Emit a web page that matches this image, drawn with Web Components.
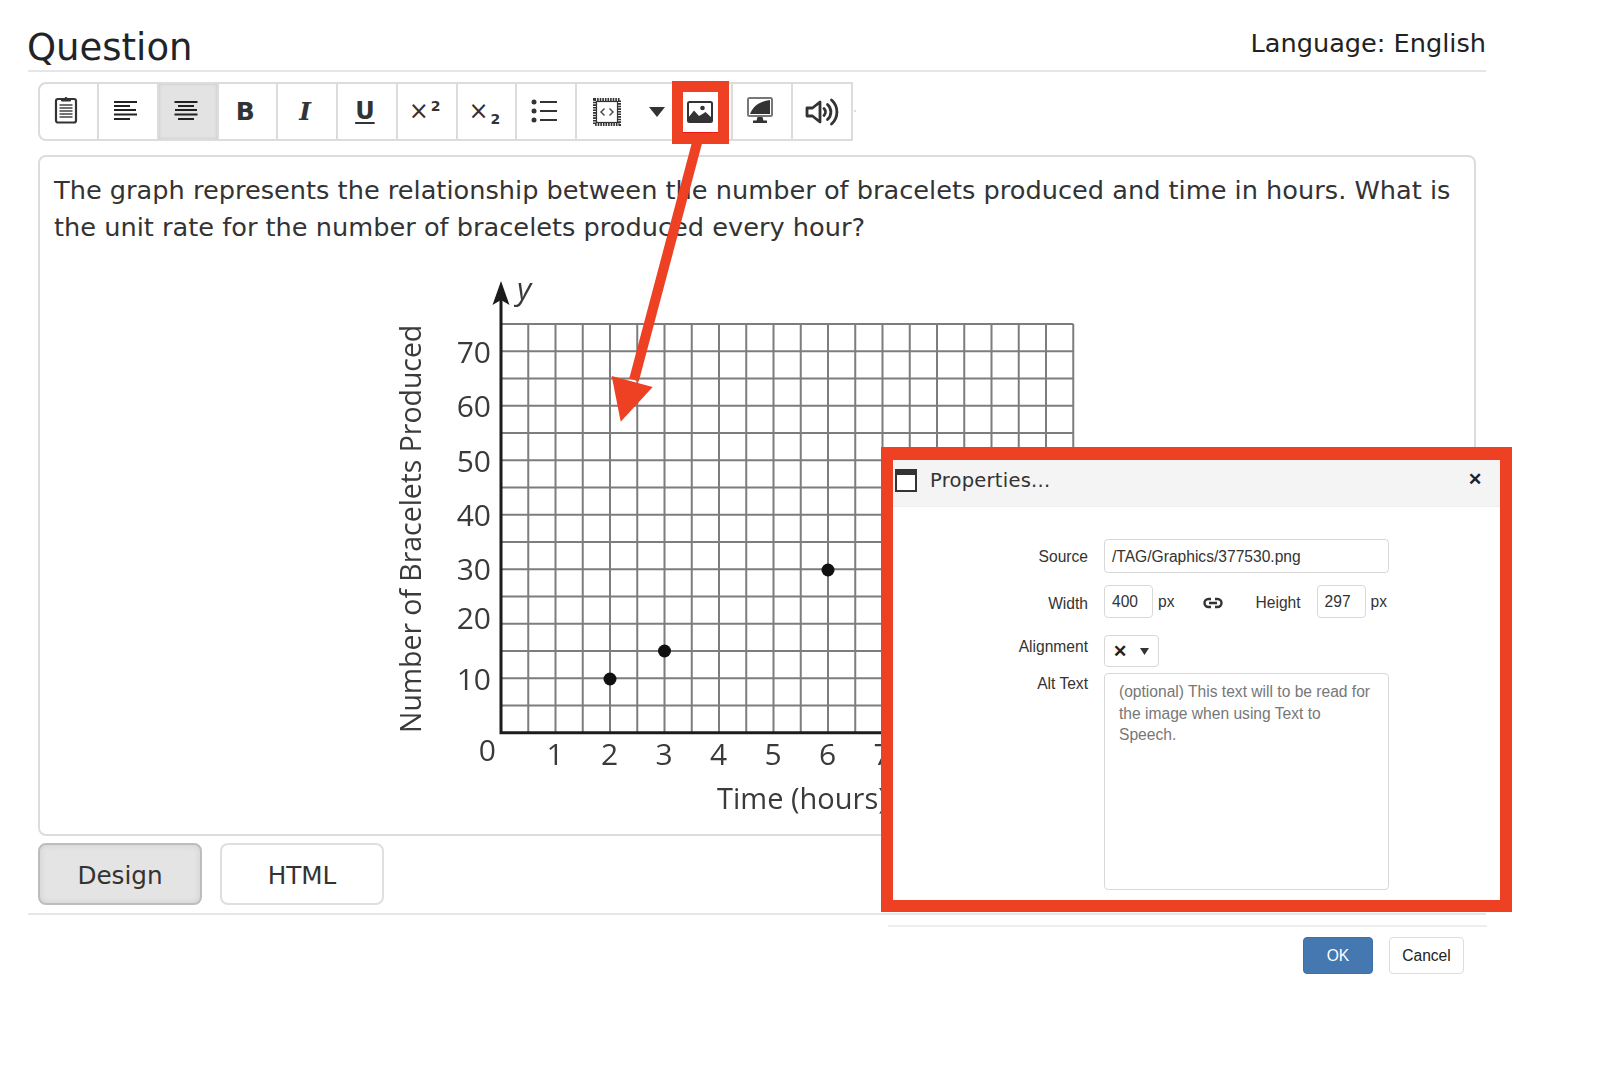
<!DOCTYPE html>
<html lang="en">
<head>
<meta charset="utf-8">
<title>Question</title>
<style>
  html, body { margin: 0; background: #fff; }
  body { font-family: "DejaVu Sans", Verdana, sans-serif; color: #333; height: 1080px; overflow: hidden; position: relative; }
  tool-button sup, tool-button sub { font-size: 14px; font-weight: 700; margin-left: 2px; }
  tool-button sup { vertical-align: 8px; line-height: 0; }
  tool-button sub { vertical-align: -5px; line-height: 0; }
</style>
</head>
<body>
<question-page>
  <page-header title-text="Question" language="Language: English"></page-header>
  <editor-toolbar>
    <tool-button><tool-icon name="clipboard"></tool-icon></tool-button>
    <tool-button><tool-icon name="align-left"></tool-icon></tool-button>
    <tool-button active><tool-icon name="align-center"></tool-icon></tool-button>
    <tool-button><b>B</b></tool-button>
    <tool-button><i>I</i></tool-button>
    <tool-button><u>U</u></tool-button>
    <tool-button><span>×<sup>2</sup></span></tool-button>
    <tool-button><span>×<sub>2</sub></span></tool-button>
    <tool-button><tool-icon name="list"></tool-icon></tool-button>
    <tool-button kind="code"><tool-icon name="code"></tool-icon><tool-icon name="caret"></tool-icon></tool-button>
    <tool-button kind="image" highlight><tool-icon name="image"></tool-icon></tool-button>
    <tool-button kind="plain"><tool-icon name="monitor"></tool-icon></tool-button>
    <tool-button kind="last"><tool-icon name="speaker"></tool-icon></tool-button>
  </editor-toolbar>
  <editor-pane>
    The graph represents the relationship between the number of bracelets produced and time in hours. What is the unit rate for the number of bracelets produced every hour?
    <bracelet-graph slot="figure"></bracelet-graph>
  </editor-pane>
  <mode-tabs></mode-tabs>
</question-page>
<callout-arrow></callout-arrow>
<properties-dialog></properties-dialog>

<script>
const icons = {
  clipboard: `<svg width="24" height="29" viewBox="0 0 24 29"><rect x="2" y="4" width="20" height="23.500" rx="2" fill="#fff" stroke="#333" stroke-width="2.200"/><path d="M7.500 6V3.500h3a1.600 1.600 0 013 0h3V6z" fill="#333" stroke="#333"/><path d="M5.500 10h13M5.500 13h13M5.500 16h13M5.500 19h13M5.500 22h13" stroke="#444" stroke-width="1.500"/></svg>`,
  "align-left": `<svg width="24" height="22" viewBox="0 0 24 22"><path d="M0 2h23M0 6h16M0 10h22M0 14.500h23M0 19h16" stroke="#222" stroke-width="2" fill="none"/></svg>`,
  "align-center": `<svg width="24" height="22" viewBox="0 0 24 22"><path d="M.5 2h23M4 6h16M1 10h22M.5 14.500h23M4 19h16" stroke="#222" stroke-width="2" fill="none"/></svg>`,
  list: `<svg width="26" height="24" viewBox="0 0 26 24"><circle cx="3" cy="3" r="2.500" fill="#333"/><circle cx="3" cy="12" r="2.500" fill="#333"/><circle cx="3" cy="21" r="2.500" fill="#333"/><path d="M9 3h17M9 12h17M9 21h17" stroke="#333" stroke-width="2"/></svg>`,
  code: `<svg width="28" height="28" viewBox="0 0 28 28"><rect x="1.500" y="1.500" width="25" height="25" fill="#fff" stroke="#333" stroke-width="3" stroke-dasharray="1.600 1"/><rect x="3.500" y="3.500" width="21" height="21" fill="none" stroke="#333" stroke-width="1.200"/><path d="M11.500 10.500L8 14l3.500 3.500M16.500 10.500L20 14l-3.500 3.500" fill="none" stroke="#444" stroke-width="1.400"/></svg>`,
  caret: `<svg width="16" height="10" viewBox="0 0 16 10"><path d="M0 0h16L8 10z" fill="#333"/></svg>`,
  image: `<svg width="26" height="22" viewBox="0 0 26 22"><rect x="1" y="1" width="24" height="20" rx="1.500" fill="#fff" stroke="#333" stroke-width="2"/><circle cx="15.500" cy="7" r="2.300" fill="#333"/><path d="M1 17l6-7.500 5 5.500 3.500-2 3-2 6.500 6V21H1z" fill="#333"/></svg>`,
  monitor: `<svg width="26" height="27" viewBox="0 0 26 27"><rect x="1" y="1" width="24" height="18" rx="1.500" fill="#fff" stroke="#777" stroke-width="2"/><path d="M3 17C6 9 13 4 23 3v14z" fill="#333"/><path d="M10.500 20h5l1 3.500h3.500V26H6v-2.500h3.500z" fill="#333"/></svg>`,
  speaker: `<svg width="34" height="28" viewBox="0 0 34 28"><path d="M2 10h5.500L15 4v20l-7.500-6H2z" fill="#fff" stroke="#333" stroke-width="2.800" stroke-linejoin="round"/><path d="M19 10.500a5 5 0 010 7M22.500 6.500a10 10 0 010 15M26.500 2a16 16 0 010 24" fill="none" stroke="#333" stroke-width="2.800" stroke-linecap="round"/></svg>`
};

class ToolIcon extends HTMLElement {
  connectedCallback() {
    const shadow = this.attachShadow({ mode: 'open' });
    shadow.innerHTML = `<style>:host{display:inline-flex;line-height:0}</style>${icons[this.getAttribute('name')]}`;
  }
}

class QuestionPage extends HTMLElement {
  constructor() {
    super();
    const shadow = this.attachShadow({ mode: 'open' });
    shadow.innerHTML = `
      <style>
        :host { display: block; width: 1458px; margin-left: 28px; padding-top: 23px; border-bottom: 2px solid #e6e6e6; padding-bottom: 8px; }
      </style>
      <slot></slot>`;
  }
}

class PageHeader extends HTMLElement {
  connectedCallback() {
    const shadow = this.attachShadow({ mode: 'open' });
    shadow.innerHTML = `
      <style>
        :host { display: flex; justify-content: space-between; align-items: flex-start; height: 47px; border-bottom: 2px solid #e6e6e6; color: #1f2429; }
        h1 { margin: 1px 0 0 -1px; font: 400 37px/47px "DejaVu Sans", sans-serif; }
        span { margin-top: 1px; font-size: 25.600px; line-height: 38px; color: #222; }
      </style>
      <h1>${this.getAttribute('title-text')}</h1>
      <span>${this.getAttribute('language')}</span>`;
  }
}

class EditorToolbar extends HTMLElement {
  constructor() {
    super();
    const shadow = this.attachShadow({ mode: 'open' });
    shadow.innerHTML = `
      <style>
        :host { display: flex; box-sizing: border-box; width: 815px; height: 59px; margin: 10px 0 0 10px; border: 2px solid #dcdcdc; border-radius: 8px 0 0 8px; position: relative; }
        :host::after { content: ""; position: absolute; right: -5px; top: 26px; width: 2px; height: 2px; background: #ddd; }
      </style>
      <slot></slot>`;
  }
}

class ToolButton extends HTMLElement {
  constructor() {
    super();
    const shadow = this.attachShadow({ mode: 'open' });
    shadow.innerHTML = `
      <style>
        :host { display: flex; box-sizing: border-box; width: 59.750px; height: 55px; padding: 0 4px 1px 0; align-items: center; justify-content: center; border-right: 2px solid #dcdcdc; position: relative; flex: none; font-size: 25px; color: #333; }
        :host(:first-child) { width: 59px; border-radius: 6px 0 0 6px; padding: 0 6px 5px 0; }
        :host([active]) { background: #e3e3e3; box-shadow: inset 0 0 3px #c4c4c4; }
        :host([kind="code"]) { width: 96px; justify-content: flex-start; padding: 0 0 0 16px; gap: 28px; border-right: 0; }
        :host([kind="image"]) { width: 60px; justify-content: flex-start; padding: 0 0 0 14px; }
        :host([kind="plain"]) { width: 60px; padding-bottom: 2px; }
        :host([kind="last"]) { width: 58px; border-right: 0; padding: 0; }
        :host([highlight])::after { content: ""; position: absolute; left: -1px; top: -3px; box-sizing: border-box; width: 57px; height: 63px; border: 11px solid #ee4023; box-shadow: inset 0 -1px 0 #f01512; }
        ::slotted(b) { font-weight: 700; font-size: 25px; color: #333; }
        ::slotted(i) { font: italic 700 25px "DejaVu Serif", serif; }
        ::slotted(u) { font-weight: 700; font-size: 24px; text-underline-offset: 3px; }
        ::slotted(span) { font-size: 24px; line-height: 1; }
      </style>
      <slot></slot>`;
  }
}

class EditorPane extends HTMLElement {
  constructor() {
    super();
    const shadow = this.attachShadow({ mode: 'open' });
    shadow.innerHTML = `
      <style>
        :host { display: block; box-sizing: border-box; width: 1438px; height: 681px; margin: 14px 0 0 10px; padding: 15px 14px 0; border: 2px solid #dcdcdc; border-radius: 8px; font-size: 25.640px; line-height: 36.500px; color: #333; }
        .figure { display: flex; justify-content: center; margin-top: 5px; }
      </style>
      <slot></slot>
      <div class="figure"><slot name="figure"></slot></div>`;
  }
}

class BraceletGraph extends HTMLElement {
  connectedCallback() {
    const shadow = this.attachShadow({ mode: 'open' });
    const step = 27.25, left = 111, top = 54, cols = 21, rows = 15;
    let lines = '';
    for (let c = 1; c <= cols; c++) lines += `<path d="M${left + c * step} ${top}V${top + rows * step}"/>`;
    for (let r = 0; r < rows; r++) lines += `<path d="M${left} ${top + r * step}H${left + cols * step}"/>`;
    const yLabels = [['70', 93], ['60', 147], ['50', 202], ['40', 256], ['30', 310], ['20', 359], ['10', 420]]
      .map(([t, y]) => `<text x="101" y="${y}" text-anchor="end">${t}</text>`).join('');
    const xLabels = [1, 2, 3, 4, 5, 6, 7]
      .map(n => `<text x="${165 + (n - 1) * 54.5}" y="495" text-anchor="middle">${n}</text>`).join('');
    shadow.innerHTML = `
      <style>
        :host { display: block; width: 734px; height: 572px; }
        svg { display: block; filter: blur(.45px); }
        text { font-family: "Open Sans", sans-serif; font-size: 30px; fill: #3a3a3a; }
        .grid path { stroke: #7d7d7d; stroke-width: 2; fill: none; }
      </style>
      <svg width="734" height="572" viewBox="0 -20 734 572">
        <g class="grid">${lines}</g>
        <path d="M${left} 30V${top + rows * step}H${left + cols * step}" fill="none" stroke="#1c1c1c" stroke-width="3"/>
        <path d="M${left} 11l8.500 24-8.500-5-8.500 5z" fill="#1c1c1c"/>
        <text x="127" y="30" font-style="italic" style="font-size:31px">y</text>
        ${yLabels}
        <text x="106" y="491" text-anchor="end">0</text>
        ${xLabels}
        <text x="327" y="539" style="font-size:29px">Time (hours)</text>
        <text transform="translate(31 463) rotate(-90)" style="font-size:28.400px">Number of Bracelets Produced</text>
        <circle cx="220" cy="409" r="6.500" fill="#111"/>
        <circle cx="274.500" cy="381" r="6.500" fill="#111"/>
        <circle cx="438" cy="300" r="6.500" fill="#111"/>
      </svg>`;
  }
}

class ModeTabs extends HTMLElement {
  constructor() {
    super();
    const shadow = this.attachShadow({ mode: 'open' });
    shadow.innerHTML = `
      <style>
        :host { display: flex; gap: 18px; margin: 7px 0 0 10px; }
        button { box-sizing: border-box; width: 164px; height: 62px; padding: 2px 0 0; border: 2px solid #dfdfdf; border-radius: 8px; background: #fff; font: 24.700px "DejaVu Sans", sans-serif; color: #333; }
        .on { background: #e4e4e4; border-color: #bdbdbd; box-shadow: inset 0 0 6px #cfcfcf; }
      </style>
      <button class="on">Design</button>
      <button>HTML</button>`;
  }
}

class CalloutArrow extends HTMLElement {
  constructor() {
    super();
    const shadow = this.attachShadow({ mode: 'open' });
    shadow.innerHTML = `
      <style>
        :host { position: absolute; left: 600px; top: 140px; width: 120px; height: 290px; pointer-events: none; }
      </style>
      <svg width="120" height="290" viewBox="600 140 120 290">
        <path d="M697.500 141L634 380" stroke="#ee4023" stroke-width="10" fill="none"/>
        <path d="M611.700 376L652.700 387 620.700 421.700z" fill="#ee4023"/>
      </svg>`;
  }
}

class PropertiesDialog extends HTMLElement {
  constructor() {
    super();
    const shadow = this.attachShadow({ mode: 'open' });
    shadow.innerHTML = `
      <style>
        :host { position: absolute; left: 881px; top: 447px; width: 631px; font: 15.600px/1.2 "Liberation Sans", Arial, sans-serif; color: #333; }
        .frame { box-sizing: border-box; height: 465px; border: 12px solid #ee4023; border-top-width: 13px; background: #fff; outline: 1px solid #ee4023; outline-offset: -12px; }
        header { display: flex; align-items: center; height: 47px; background: #f4f4f4; border-bottom: 1px solid #eee; box-sizing: border-box; padding: 0 18px 7px 2px; }
        header svg { flex: none; margin: 1px 13px 0 0; }
        header h2 { flex: 1; margin: 1px 0 0; font: 400 19.500px "DejaVu Sans", sans-serif; letter-spacing: .25px; color: #333; }
        header .close { font: 700 17px "Liberation Sans", sans-serif; color: #222; }
        form { display: grid; grid-template-columns: 195px 285px; column-gap: 16px; padding-top: 32px; }
        label { text-align: right; }
        .field { box-sizing: border-box; border: 1px solid #d8d8d8; border-radius: 4px; background: #fff; padding-left: 7px; display: flex; align-items: center; }
        .source { height: 34px; margin-bottom: 12px; padding-top: 2px; }
        .source-label { padding-top: 9px; }
        .size-label { padding-top: 10px; }
        .size { display: flex; align-items: center; height: 33px; margin-bottom: 17px; }
        .size .field { width: 49px; height: 33px; padding-top: 2px; }
        .unit { margin-left: 5px; padding-top: 2px; }
        .size svg { margin: 2px 0 0 29px; }
        .size .h { margin-left: 32px; margin-right: 16px; padding-top: 4px; }
        .align-label { padding-top: 3px; }
        .align { width: 55px; height: 32px; margin-bottom: 6px; padding-left: 8px; gap: 13px; }
        .align b { font-size: 17px; line-height: 1; color: #222; }
        .area { height: 217px; display: block; padding: 7px 14px 0; color: #777; line-height: 21.500px; }
        .alt-label { padding-top: 2px; }
        .rule { height: 2px; background: #eee; width: 599px; margin: 13px 0 0 7px; }
        .actions { display: flex; justify-content: flex-end; gap: 16px; width: 583px; margin-top: 10px; }
        .actions button { box-sizing: border-box; height: 37px; font: 15.600px "Liberation Sans", Arial, sans-serif; border-radius: 4px; padding: 0; }
        .ok { width: 70px; background: #4577b0; color: #fff; border: 1px solid #3f6fa6; }
        .cancel { width: 75px; background: #fff; color: #222; border: 1px solid #ddd; }
      </style>
      <div class="frame">
        <header>
          <svg width="22" height="23" viewBox="0 0 22 23"><rect x="1" y="1" width="20" height="21" fill="#fff" stroke="#333" stroke-width="2"/><rect x="1" y="1" width="20" height="5" fill="#333"/></svg>
          <h2>Properties...</h2>
          <span class="close">✕</span>
        </header>
        <form>
          <label class="source-label">Source</label>
          <div class="field source">/TAG/Graphics/377530.png</div>
          <label class="size-label">Width</label>
          <div class="size">
            <div class="field">400</div><span class="unit">px</span>
            <svg width="20" height="12" viewBox="0 0 20 12"><path d="M8 2H5.500a4 4 0 000 8H8M12 2h2.500a4 4 0 010 8H12M6 6h8" fill="none" stroke="#333" stroke-width="2.400"/></svg>
            <span class="h">Height</span>
            <div class="field">297</div><span class="unit">px</span>
          </div>
          <label class="align-label">Alignment</label>
          <div class="field align"><b>✕</b><svg width="9" height="7" viewBox="0 0 9 7"><path d="M0 0h9L4.500 7z" fill="#333"/></svg></div>
          <label class="alt-label">Alt Text</label>
          <div class="field area">(optional) This text will to be read for the image when using Text to Speech.</div>
        </form>
      </div>
      <div class="rule"></div>
      <div class="actions">
        <button class="ok">OK</button>
        <button class="cancel">Cancel</button>
      </div>`;
  }
}

customElements.define('tool-icon', ToolIcon);
customElements.define('question-page', QuestionPage);
customElements.define('page-header', PageHeader);
customElements.define('editor-toolbar', EditorToolbar);
customElements.define('tool-button', ToolButton);
customElements.define('editor-pane', EditorPane);
customElements.define('bracelet-graph', BraceletGraph);
customElements.define('mode-tabs', ModeTabs);
customElements.define('callout-arrow', CalloutArrow);
customElements.define('properties-dialog', PropertiesDialog);
</script>
</body>
</html>
